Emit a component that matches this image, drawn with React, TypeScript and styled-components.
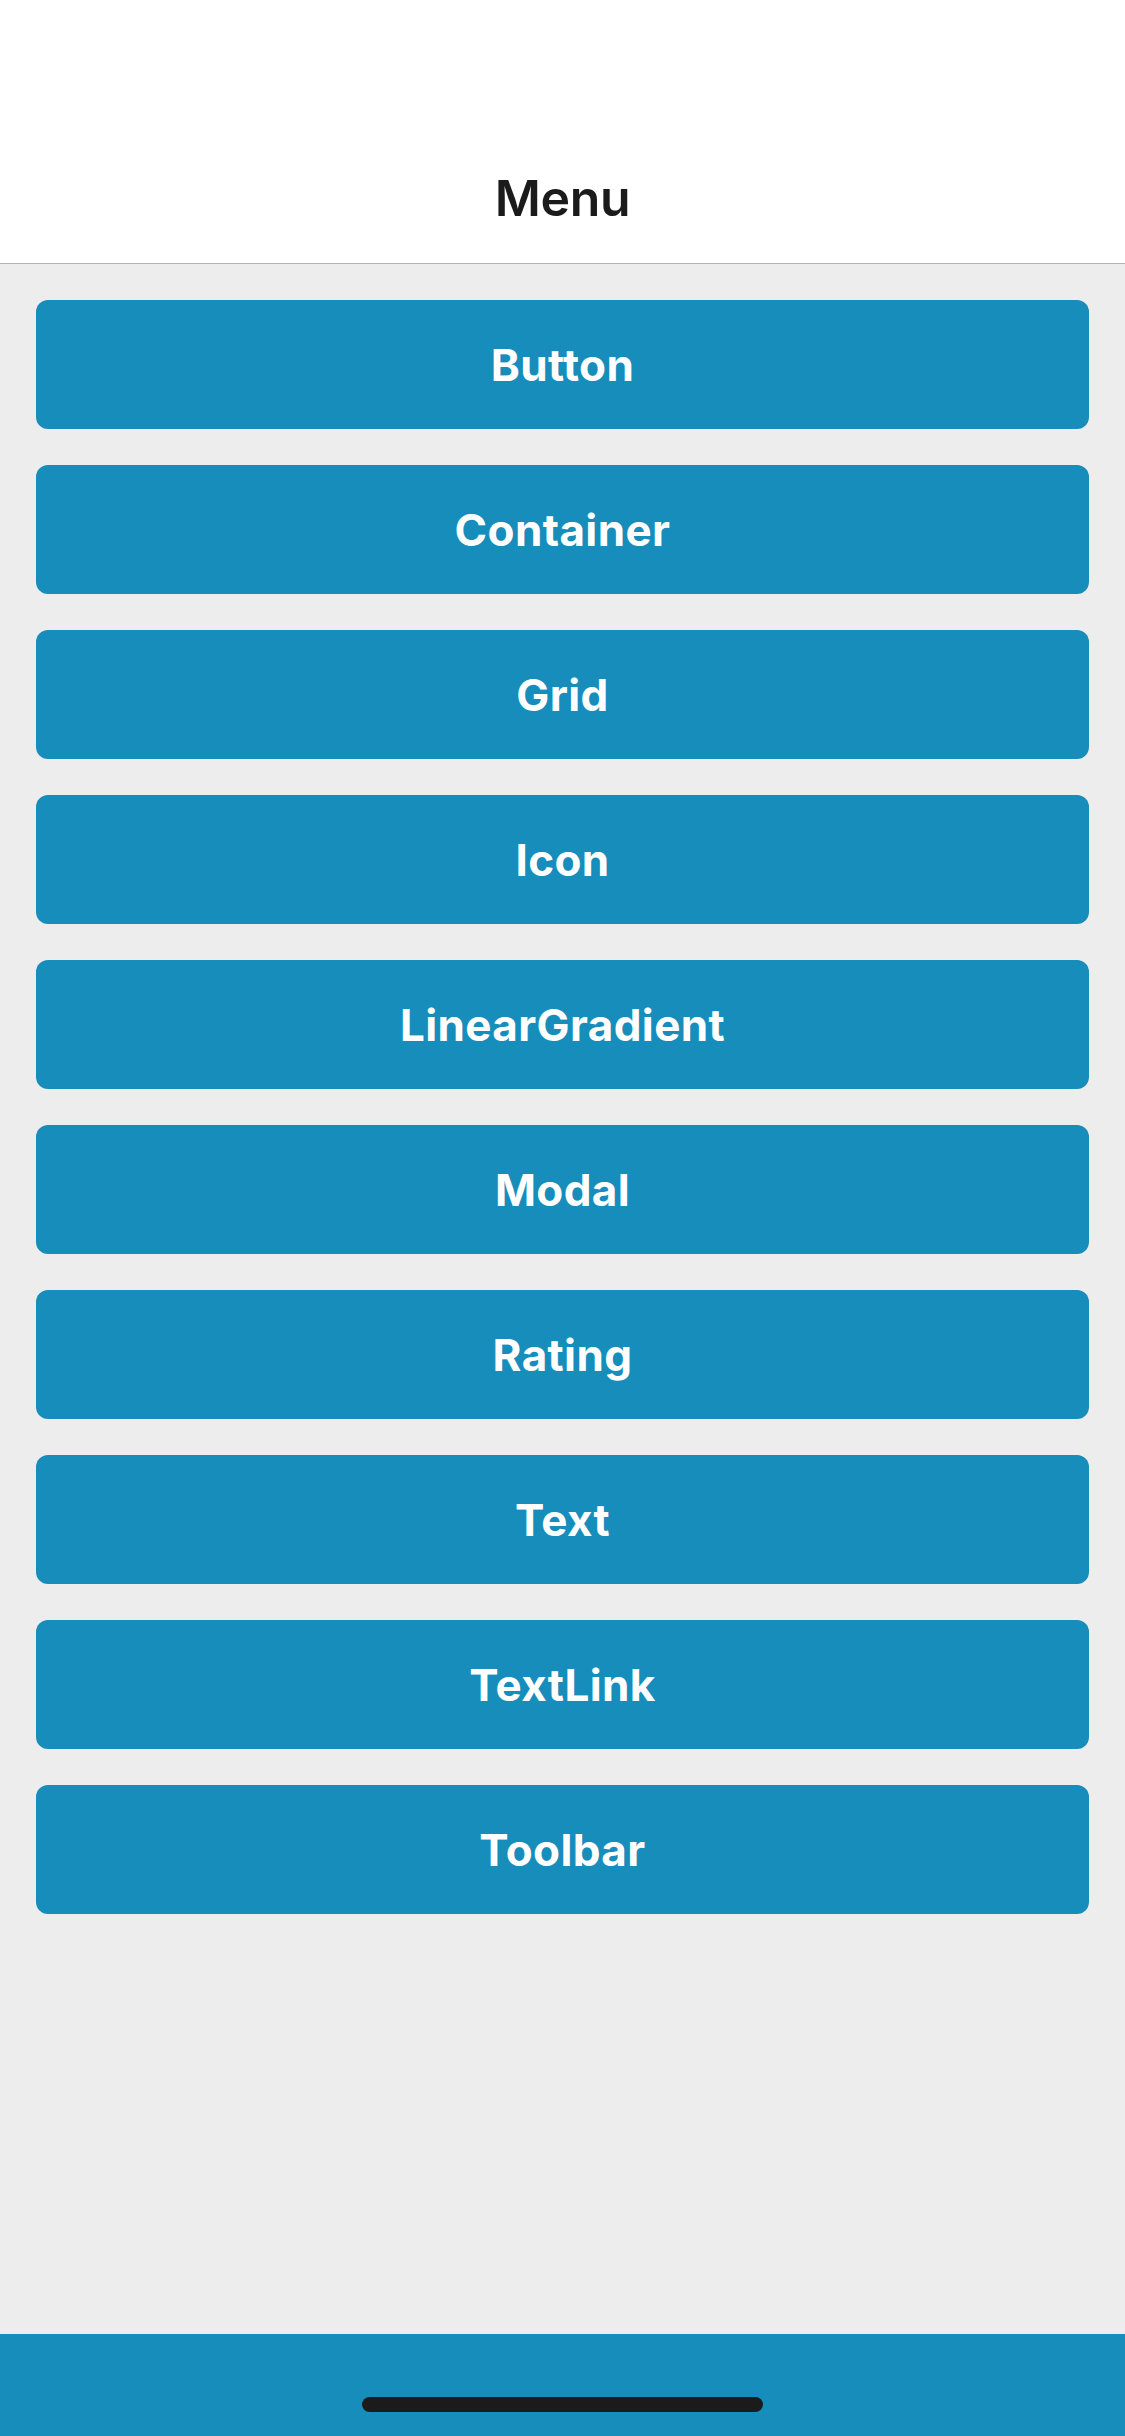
import styled, { createGlobalStyle } from 'styled-components';

const GlobalStyle = createGlobalStyle`
    html, body {
        margin: 0;
        padding: 0;
        background-color: #ededed;
    }

    * {
        box-sizing: border-box;
    }
`;

const Screen = styled.div`
    display: flex;
    flex-direction: column;
    width: 1125px;
    height: 2436px;
    background-color: #ededed;
    font-family: Inter, 'Liberation Sans', sans-serif;
`;

const Header = styled.header`
    display: flex;
    align-items: center;
    justify-content: center;
    height: 264px;
    padding-top: 132px;
    background-color: #ffffff;
    border-bottom: 1px solid #b3b3b3;
`;

const Title = styled.h1`
    margin: 0;
    font-size: 50px;
    font-weight: 600;
    color: #1b1b1b;
    letter-spacing: -0.3px;
`;

const MenuList = styled.nav`
    flex: 1;
    display: flex;
    flex-direction: column;
    gap: 36px;
    padding: 36px;
`;

const MenuButton = styled.button`
    display: flex;
    align-items: center;
    justify-content: center;
    height: 129px;
    width: 100%;
    border: none;
    border-radius: 12px;
    background-color: #178dbb;
    color: #ffffff;
    font-family: inherit;
    font-size: 44px;
    font-weight: 700;
    letter-spacing: 0.4px;
    cursor: pointer;
`;

const Footer = styled.footer`
    display: flex;
    align-items: flex-end;
    justify-content: center;
    height: 102px;
    padding-bottom: 24px;
    background-color: #178dbb;
`;

const HomeIndicator = styled.div`
    width: 401px;
    height: 15px;
    border-radius: 8px;
    background-color: #1b1b1b;
`;

const items = [
    'Button',
    'Container',
    'Grid',
    'Icon',
    'LinearGradient',
    'Modal',
    'Rating',
    'Text',
    'TextLink',
    'Toolbar',
];

export default function App() {
    const onSelect = (name: string) => {
        console.debug('Open', name);
    };

    return (
        <>
            <GlobalStyle />
            <Screen>
                <Header>
                    <Title>Menu</Title>
                </Header>
                <MenuList>
                    {items.map((name) => (
                        <MenuButton key={name} onClick={() => onSelect(name)}>
                            {name}
                        </MenuButton>
                    ))}
                </MenuList>
                <Footer>
                    <HomeIndicator />
                </Footer>
            </Screen>
        </>
    );
}
